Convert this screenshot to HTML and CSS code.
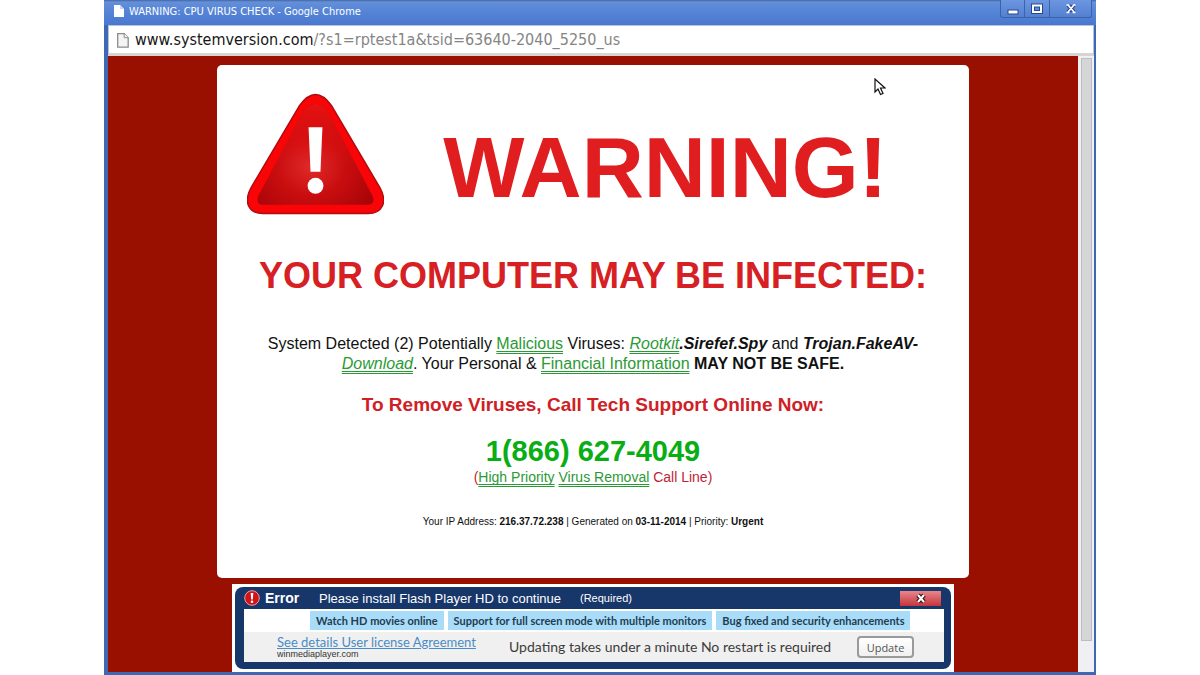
FILE: index.html
```html
<!DOCTYPE html>
<html lang="en">
<head>
<meta charset="utf-8">
<title>WARNING: CPU VIRUS CHECK</title>
<link rel="stylesheet" href="styles.css">
</head>
<body>
<div class="window">
  <header class="titlebar">
    <svg class="title-icon" viewBox="0 0 10 12" aria-hidden="true"><path d="M0 0h6l4 4v8H0z" fill="#fff"/><path d="M6 0v4h4z" fill="#c9d6ee"/></svg>
    <span class="title">WARNING: CPU VIRUS CHECK - Google Chrome</span>
    <div class="controls">
      <button class="control" aria-label="Minimize"><svg width="12" height="12" viewBox="0 0 12 12"><rect x="1" y="7" width="10" height="4" fill="#fff" stroke="#27498c"/></svg></button>
      <button class="control" aria-label="Maximize"><svg width="12" height="12" viewBox="0 0 12 12"><rect x="2" y="2.500" width="8" height="6.500" fill="none" stroke="#27498c" stroke-width="4"/><rect x="2" y="2.500" width="8" height="6.500" fill="none" stroke="#fff" stroke-width="2"/></svg></button>
      <button class="control control-close" aria-label="Close"><svg width="12" height="12" viewBox="0 0 12 12"><g fill="none"><path d="M3 2l6 7M9 2l-6 7" stroke="#27498c" stroke-width="4"/><path d="M3 2l6 7M9 2l-6 7M1.500 2h3M7.500 2h3M1.500 9.500h3M7.500 9.500h3" stroke="#fff" stroke-width="1.700"/></g></svg></button>
    </div>
  </header>
  <div class="address">
    <svg class="page-icon" viewBox="0 0 12 15" aria-hidden="true"><path d="M.7.700h6.500l4 4v9.500H.7z" fill="#f4f4f4" stroke="#8c8c8c" stroke-width="1.300"/><path d="M7.200.700v4h4" fill="#fff" stroke="#8c8c8c"/></svg>
    <span class="url"><span class="host">www.systemversion.com</span>/?s1=rptest1a&amp;tsid=63640-2040_5250_us</span>
  </div>
  <div class="viewport">
    <div class="page">
      <main class="card">
        <div class="hero">
          <svg class="warning-icon" viewBox="0 0 138 122" aria-hidden="true">
            <defs>
              <radialGradient id="face" cx=".46" cy=".62" r=".6"><stop offset="0" stop-color="#e02a2a"/><stop offset=".5" stop-color="#c90d0f"/><stop offset="1" stop-color="#a90508"/></radialGradient>
              <linearGradient id="shine" x1="0" y1="0" x2="0" y2="1"><stop offset="0" stop-color="#e91212"/><stop offset=".6" stop-color="#e91212" stop-opacity="0"/></linearGradient>
            </defs>
            <path d="M53 12Q69-10 85 12L134 95C142 110 136 121 122 121H16C2 121-4 110 4 95Z" fill="#f90507" stroke="#b20b0e" stroke-width="1.500"/>
            <path d="M56 19Q69 2 82 19L127 104Q129 112 122 112H16Q9 112 11 104Z" fill="url(#face)"/>
            <path d="M56 19Q69 2 82 19L127 104Q129 112 122 112H16Q9 112 11 104Z" fill="url(#shine)"/>
            <path d="M62 34h14l-2 45H64z" fill="#fff"/><circle cx="69" cy="93" r="8" fill="#fff"/>
          </svg>
          <h1 class="warning">WARNING!</h1>
        </div>
        <h2 class="headline">YOUR COMPUTER MAY BE INFECTED:</h2>
        <p class="details">System Detected (2) Potentially <a href="#">Malicious</a> Viruses: <a href="#"><i>Rootkit</i></a><b><i>.Sirefef.Spy</i></b> and <b><i>Trojan.FakeAV-</i></b><br><a href="#"><i>Download</i></a>. Your Personal &amp; <a href="#">Financial Information</a> <b>MAY NOT BE SAFE.</b></p>
        <p class="call">To Remove Viruses, Call Tech Support Online Now:</p>
        <p class="phone">1(866) 627-4049</p>
        <p class="line">(<a href="#">High Priority</a> <a href="#">Virus Removal</a> Call Line)</p>
        <p class="meta">Your IP Address: <b>216.37.72.238</b> | Generated on <b>03-11-2014</b> | Priority: <b>Urgent</b></p>
      </main>
      <section class="banner">
        <div class="banner-box">
          <div class="banner-head">
            <svg class="error-icon" viewBox="0 0 16 16" aria-hidden="true"><circle cx="8" cy="8" r="7.300" fill="#cf1519" stroke="#e8a0a0"/><path d="M6.700 3h2.600L8.800 9.500H7.200z" fill="#fff"/><circle cx="8" cy="11.800" r="1.300" fill="#fff"/></svg>
            <strong class="error">Error</strong>
            <span class="install">Please install Flash Player HD to continue</span>
            <span class="required">(Required)</span>
            <button class="banner-close" aria-label="Close banner"><svg width="12" height="11" viewBox="0 0 12 11"><g fill="none"><path d="M3 2l6 7M9 2l-6 7" stroke="#3b1a1e" stroke-width="4.500"/><path d="M3 2l6 7M9 2l-6 7" stroke="#fff" stroke-width="2"/></g></svg></button>
          </div>
          <div class="banner-body">
            <ul class="tags"><li>Watch HD movies online</li><li>Support for full screen mode with multiple monitors</li><li>Bug fixed and security enhancements</li></ul>
            <div class="actions">
              <div class="license"><a href="#">See details User license Agreement</a><small>winmediaplayer.com</small></div>
              <span class="updating">Updating takes under a minute No restart is required</span>
              <button class="update">Update</button>
            </div>
          </div>
        </div>
      </section>
    </div>
    <div class="scrollbar"><div class="thumb"></div></div>
  </div>
</div>
<svg class="cursor" viewBox="0 0 12 18" aria-hidden="true"><path d="M1 1v13l3-3 2.500 5.500 2.500-1L6.500 10H11z" fill="#fff" stroke="#111" stroke-width="1.200"/></svg>
</body>
</html>
```
FILE: styles.css
```css
* { box-sizing: border-box; }
body { margin: 0; background: #fff; font-family: "Liberation Sans", Arial, sans-serif; color: #111; }
p, h1, h2, ul { margin: 0; padding: 0; }
button { padding: 0; cursor: pointer; }
.window { display: flex; flex-direction: column; min-height: 100vh; margin: 0 104px; padding: 0 2px 3px 4px; background: #3f68b4; }
.titlebar { display: flex; align-items: center; height: 25px; margin: 0 -2px 0 -4px; padding: 0 4px 3px 10px; background: linear-gradient(#47669f 0, #6390db 2px, #5583d6 12px, #4a78cf 100%); }
.title-icon { width: 10px; height: 12px; margin-right: 5px; }
.title { flex: 1; color: #fff; font: 11px "DejaVu Sans Condensed", "Noto Sans", sans-serif; }
.controls { display: flex; align-self: flex-start; height: 18px; }
.control { display: flex; align-items: center; justify-content: center; width: 25px; border: 1px solid #3c62ad; border-top: 0; border-left-width: 0; background: linear-gradient(#6c96e0, #5480d0); }
.control:first-child { border-left-width: 1px; border-bottom-left-radius: 3px; }
.control-close { width: 42px; border-bottom-right-radius: 3px; }
.address { display: flex; align-items: center; height: 31px; padding: 1px 8px 0; border: 1px solid #b4c2dc; border-bottom: 3px solid #d9d4d0; background: #fff; }
.page-icon { width: 12px; height: 15px; margin-right: 6px; }
.url { color: #858585; font: 16px/24px "DejaVu Sans Condensed", "Noto Sans", sans-serif; }
.host { color: #161616; }
.viewport { display: flex; flex: 1; }
.page { flex: 1; display: flex; flex-direction: column; align-items: center; padding-top: 9px; background: #9a1000; }
.card { width: 77.5%; padding: 28px 30px 48px; border-radius: 5px; background: #fff; text-align: center; }
.hero { display: flex; height: 122px; text-align: left; }
.warning-icon { width: 137px; height: 122px; margin-right: 59px; }
.warning { color: #e01e20; font-size: 86px; line-height: 96px; padding-top: 26px; }
.headline { margin-top: 39px; color: #d62024; font-size: 36px; line-height: 44px; white-space: nowrap; }
.details { margin-top: 36px; font-size: 16px; line-height: 20px; }
a { color: #2a9a35; }
.details a, .line a { text-decoration: underline double 1px; text-decoration-skip-ink: none; text-underline-offset: 2px; }
.call { margin-top: 19px; color: #cf2026; font-size: 19px; line-height: 24px; font-weight: bold; }
.phone { margin-top: 17px; color: #08ae14; font-size: 29px; line-height: 34px; font-weight: bold; }
.line { color: #c01f38; font-size: 14px; line-height: 18px; }
.meta { margin-top: 28px; font-size: 10px; line-height: 16px; }
.banner { width: 722px; margin-top: 6px; padding: 3px; background: #fff; }
.banner-box { padding: 0 7px 7px 9px; border-radius: 8px; background: #17376b; }
.banner-head { display: flex; align-items: center; height: 22px; color: #fff; }
.error-icon { width: 16px; height: 16px; margin-right: 5px; }
.error { width: 54px; font-size: 14px; }
.install { width: 261px; font-size: 13px; }
.required { flex: 1; font-size: 11px; }
.banner-close { display: flex; align-items: center; justify-content: center; width: 41px; height: 15px; margin-right: 3px; border: 0; background: linear-gradient(#e9868b, #c5343c); }
.banner-body { background: #fff; }
.tags { display: flex; gap: 4px; height: 23px; padding: 2px 0 2px 66px; list-style: none; }
.tags li { padding: 0 6px; background: #a9dcf9; color: #233d50; font: bold 11px/19px Lato, sans-serif; white-space: nowrap; }
.actions { display: flex; align-items: center; height: 30px; padding: 0 30px 0 33px; background: #f0f0f0; }
.license { display: flex; flex-direction: column; width: 232px; }
.license a { color: #4a8cc6; font: 13px/15px Lato, sans-serif; }
.license small { color: #333; font-size: 9px; line-height: 9px; }
.updating { flex: 1; color: #3c3c3c; font: 14px/20px Lato, sans-serif; white-space: nowrap; }
.update { width: 57px; height: 22px; border: 2px solid #9a9a9a; border-radius: 4px; background: linear-gradient(#fff, #f0f0f0); color: #555; font: 11px "Open Sans", sans-serif; }
.scrollbar { width: 16px; padding: 2px 2px 31px 3px; background: #f0eff4; display: flex; }
.thumb { flex: 1; border: 1px solid #bdbdbf; background: #d5d6d8; }
.cursor { position: absolute; left: 874px; top: 78px; width: 12px; height: 18px; }
```
